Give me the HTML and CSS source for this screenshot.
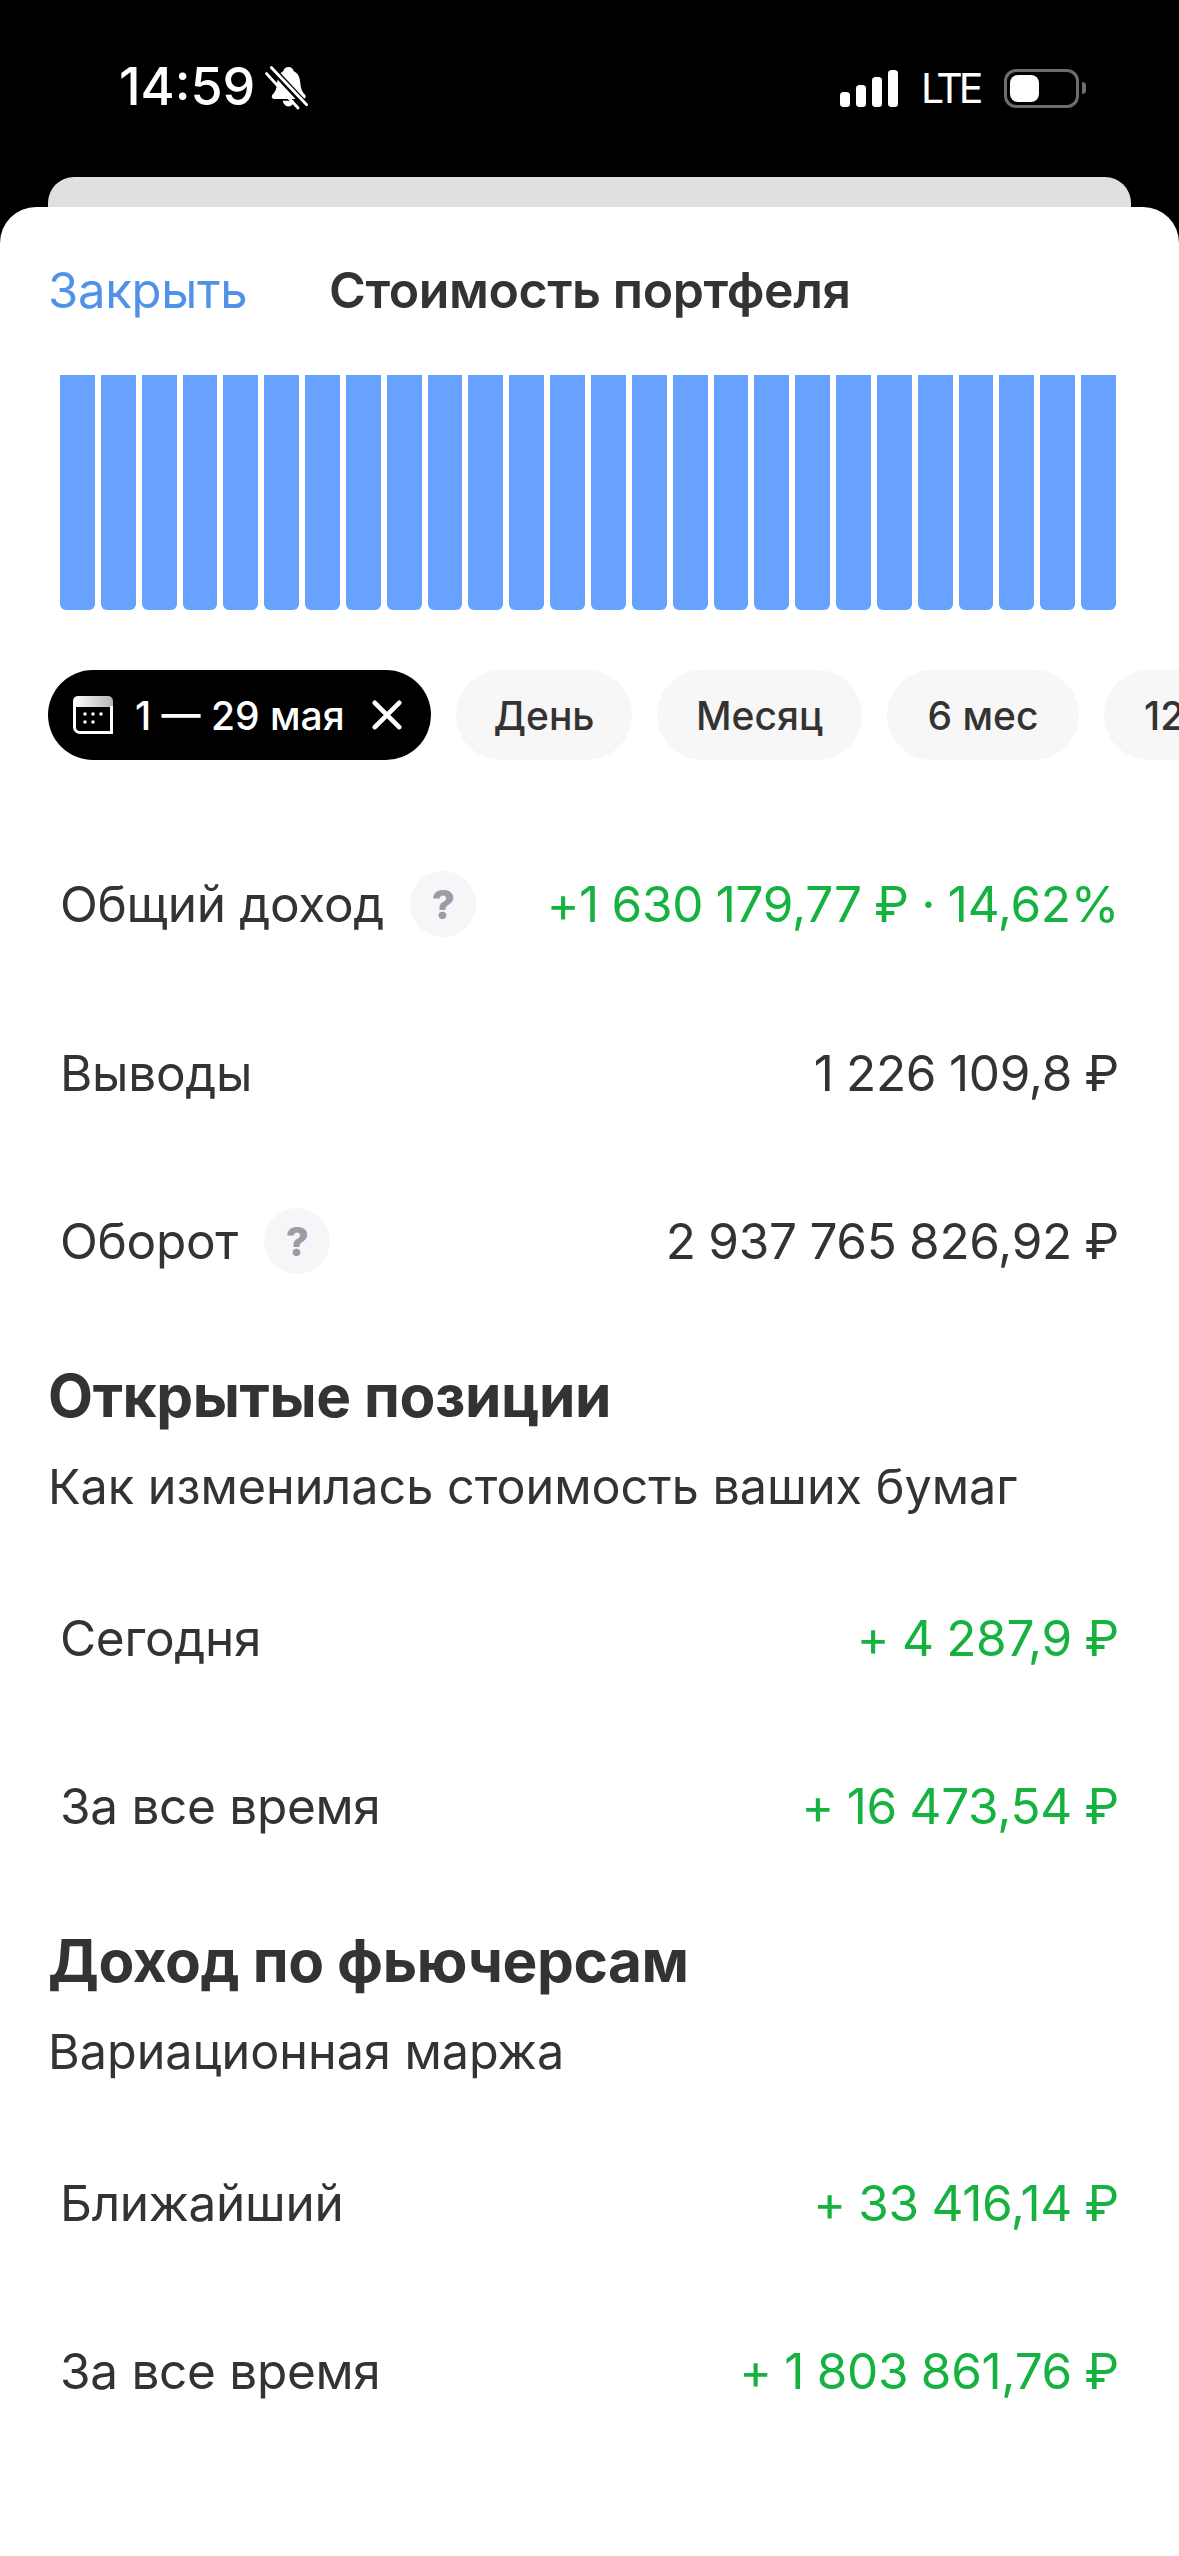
FILE: index.html
```html
<!DOCTYPE html>
<html lang="ru">
<head>
<meta charset="utf-8">
<title>Стоимость портфеля</title>
<link rel="stylesheet" href="styles.css">
</head>
<body>
<header class="status">
  <div class="status-left">
    <span class="time">14:59</span>
    <svg class="bell" viewBox="0 0 40 44" aria-hidden="true">
      <path fill="#fff" d="M20 1c3 0 5 2 5.500 4.500C31 8 32 13 32.500 19c.4 5 2 8 5 11.500 1 1.500 .5 4-2 4H5c-2.500 0-3-2.500-2-4C6 27 7.500 24 8 19c.5-6 1.500-11 6.500-13.500C15 3 17 1 20 1z"/>
      <path fill="#fff" d="M14 36.500h12c-.5 3.500-3 6-6 6s-5.500-2.500-6-6z"/>
      <path stroke="#000" stroke-width="7" d="M1 1l38 41"/>
      <path stroke="#fff" stroke-width="3" stroke-linecap="round" d="M2 1.500l37 39M-3 8l33 36"/>
    </svg>
  </div>
  <div class="status-right">
    <div class="signal"><i class="s1"></i><i class="s2"></i><i class="s3"></i><i class="s4"></i></div>
    <span class="lte">LTE</span>
    <div class="battery"><div class="battery-level"></div></div>
    <div class="battery-cap"></div>
  </div>
</header>

<div class="back-card"></div>

<main class="sheet">
  <div class="nav">
    <span class="close">Закрыть</span>
    <span class="nav-title">Стоимость портфеля</span>
  </div>

  <div class="bars">
    <i></i><i></i><i></i><i></i><i></i><i></i><i></i><i></i><i></i><i></i><i></i><i></i><i></i>
    <i></i><i></i><i></i><i></i><i></i><i></i><i></i><i></i><i></i><i></i><i></i><i></i><i></i>
  </div>

  <div class="pills">
    <div class="pill pill-active">
      <svg class="cal" viewBox="0 0 40 38" aria-hidden="true">
        <defs><linearGradient id="calHead" x1="0" y1="0" x2="1" y2="0"><stop offset="0" stop-color="#fff"/><stop offset="1" stop-color="#b5b5b5"/></linearGradient></defs>
        <path fill="url(#calHead)" d="M5 0h30a5 5 0 0 1 5 5v6H0V5a5 5 0 0 1 5-5z"/>
        <path fill="none" stroke="#fff" stroke-width="3" d="M1.500 10v21a5.500 5.500 0 0 0 5.500 5.500h31.500V10"/>
        <g fill="#fff"><circle cx="12" cy="18" r="1.800"/><circle cx="20" cy="18" r="1.800"/><circle cx="28" cy="18" r="1.800"/><circle cx="12" cy="26" r="1.800"/><circle cx="20" cy="26" r="1.800"/></g>
      </svg>
      <span class="pill-text">1 — 29 мая</span>
      <svg class="x" viewBox="0 0 32 32" aria-hidden="true"><path stroke="#fff" stroke-width="5" stroke-linecap="round" d="M3 3l26 26M29 3L3 29"/></svg>
    </div>
    <div class="pill pill-day">День</div>
    <div class="pill pill-month">Месяц</div>
    <div class="pill pill-six">6 мес</div>
    <div class="pill pill-year">12 мес</div>
  </div>

  <section class="rows rows-top">
    <div class="row"><div class="label"><span>Общий доход</span><span class="hint">?</span></div><span class="value green">+1 630 179,77 ₽ · 14,62%</span></div>
    <div class="row"><div class="label"><span>Выводы</span></div><span class="value">1 226 109,8 ₽</span></div>
    <div class="row"><div class="label"><span>Оборот</span><span class="hint">?</span></div><span class="value">2 937 765 826,92 ₽</span></div>
  </section>

  <h2 class="heading">Открытые позиции</h2>
  <p class="sub">Как изменилась стоимость ваших бумаг</p>
  <section class="rows">
    <div class="row"><div class="label"><span>Сегодня</span></div><span class="value green">+ 4 287,9 ₽</span></div>
    <div class="row"><div class="label"><span>За все время</span></div><span class="value green">+ 16 473,54 ₽</span></div>
  </section>

  <h2 class="heading">Доход по фьючерсам</h2>
  <p class="sub">Вариационная маржа</p>
  <section class="rows">
    <div class="row"><div class="label"><span>Ближайший</span></div><span class="value green">+ 33 416,14 ₽</span></div>
    <div class="row"><div class="label"><span>За все время</span></div><span class="value green">+ 1 803 861,76 ₽</span></div>
  </section>
</main>
</body>
</html>
```
FILE: styles.css
```css
* { box-sizing: border-box; }
html, body { margin: 0; padding: 0; }
body {
  width: 1179px;
  height: 2556px;
  overflow: hidden;
  background: #000;
  font-family: Inter, "Noto Sans", "Liberation Sans", sans-serif;
  color: #333;
}
.status {
  height: 177px;
  display: flex;
  justify-content: space-between;
  align-items: flex-start;
  padding: 62px 93px 0 119px;
  color: #fff;
}
.status-left { display: flex; align-items: center; gap: 14px; }
.time { font-size: 52px; line-height: 50px; font-weight: 500; }
.bell { width: 39px; height: 42px; overflow: visible; }
.status-right { display: flex; align-items: center; height: 46px; margin-top: 3px; }
.signal { display: flex; align-items: flex-end; gap: 6px; height: 37px; margin-right: 23px; }
.signal i { display: block; width: 10px; background: #fff; border-radius: 3.500px; }
.s1 { height: 15px; } .s2 { height: 22px; } .s3 { height: 30px; } .s4 { height: 37px; }
.lte { width: 59px; margin-right: 24px; font-size: 41px; line-height: 46px; font-weight: 400; letter-spacing: -4px; white-space: nowrap; }
.battery {
  width: 75px; height: 39px;
  border: 3px solid #6d6d6d;
  border-radius: 12px;
  padding: 3px;
}
.battery-level { width: 29px; height: 27px; background: #fff; border-radius: 8px; }
.battery-cap { width: 4px; height: 12px; margin-left: 3px; background: #6d6d6d; border-radius: 0 4px 4px 0; }

.back-card {
  height: 30px;
  margin: 0 48px;
  background: #e0e0e0;
  border-radius: 26px 26px 0 0;
}
.sheet {
  height: 2349px;
  background: #fff;
  border-radius: 36px 36px 0 0;
  padding: 0 48px;
  overflow: hidden;
}
.nav { display: flex; align-items: center; height: 168px; padding-bottom: 2px; }
.close { font-size: 49px; color: #5191e8; width: 281px; letter-spacing: -0.3px; }
.nav-title { font-size: 50px; font-weight: 600; letter-spacing: -0.4px; }

.bars { display: flex; gap: 6px; height: 235px; margin: 0 15px 0 12px; }
.bars i { flex: 1; background: #67a3fe; border-radius: 0 0 6px 6px; }

.pills { display: flex; gap: 25px; margin-top: 60px; width: 1131px; overflow: hidden; }
.pill {
  flex: none;
  height: 90px;
  display: flex;
  align-items: center;
  justify-content: center;
  border-radius: 45px;
  background: #f7f7f7;
  font-size: 39px;
  font-weight: 500;
}
.pill-active { width: 383px; background: #000; color: #fff; justify-content: flex-start; padding-left: 25px; gap: 22px; }
.pill-day { width: 176px; }
.pill-month { width: 205px; }
.pill-six { width: 192px; }
.pill-year { width: 220px; justify-content: flex-start; padding-left: 40px; }
.cal { width: 40px; height: 38px; }
.x { width: 30px; height: 30px; margin-left: 5px; }

.rows { display: flex; flex-direction: column; margin-top: 37px; }
.rows-top { margin-top: 60px; }
.row {
  height: 168.500px;
  display: flex;
  align-items: center;
  justify-content: space-between;
  padding: 0 12px;
  font-size: 49.500px;
}
.label { display: flex; align-items: center; gap: 26px; letter-spacing: -0.3px; }
.value { letter-spacing: -0.3px; word-spacing: -1px; }
.green { color: #16b23f; }
.hint {
  width: 66px; height: 66px;
  border-radius: 50%;
  background: #f6f6f8;
  color: #9c9ca6;
  font-size: 40px;
  font-weight: 800;
  display: flex; align-items: center; justify-content: center;
}
.heading { margin: 35px 0 0; font-size: 58.500px; line-height: 70px; font-weight: 700; letter-spacing: -0.4px; }
.sub { margin: 0; font-size: 48.500px; line-height: 60px; padding-top: 26px; }
```
